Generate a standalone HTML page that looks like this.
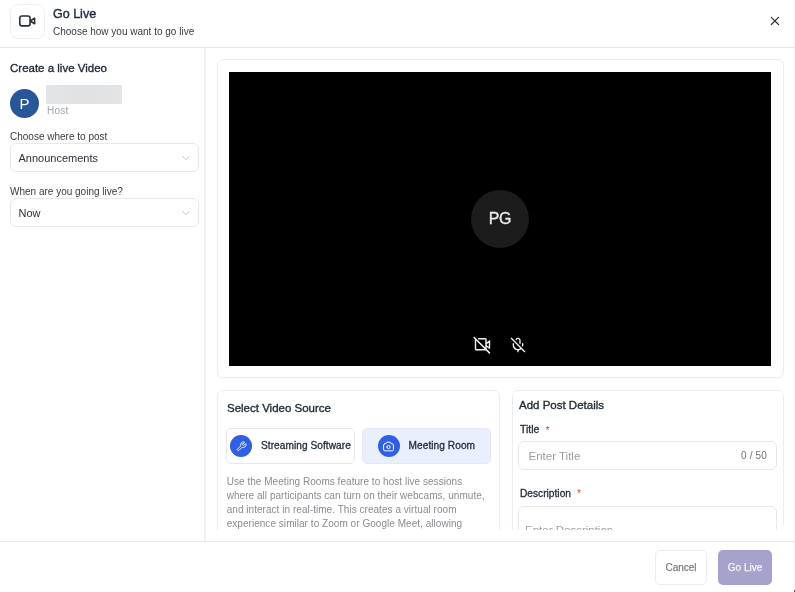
<!DOCTYPE html>
<html><head><meta charset="utf-8">
<style>
*{box-sizing:border-box;margin:0;padding:0}
html,body{width:795px;height:592px;overflow:hidden;background:#fff;font-family:"Liberation Sans",sans-serif;color:#1f2937}
.abs{position:absolute}
#rb{position:absolute;left:794px;top:0;width:1px;height:592px;background:#f4f4f4}
#hdr{position:absolute;left:0;top:0;width:794px;height:48px;border-bottom:1px solid #e5e7eb}
#hicon{position:absolute;left:10px;top:3.5px;width:35px;height:35px;border:1px solid #eeeff1;border-radius:8px}
#htitle{position:absolute;left:53px;top:6.5px;font-size:12.5px;-webkit-text-stroke:0.4px #1e293b;color:#1e293b;white-space:nowrap}
#hsub{position:absolute;left:53px;top:26px;font-size:10px;color:#363b43;white-space:nowrap}
#close{position:absolute;left:769px;top:15px;width:12px;height:12px}
#side{position:absolute;left:0;top:48px;width:204px;height:493px}
#sideb{position:absolute;left:204px;top:48px;width:2px;height:493px;background:#f1f1f1}
.lbl{position:absolute;font-size:10px;color:#363a41;white-space:nowrap}
.sel{position:absolute;left:10px;width:189px;height:29px;border:1px solid #e8e8e8;border-radius:6px}
.sel span{position:absolute;left:7.5px;top:8px;font-size:11px;color:#2b2f37}
.sel svg{position:absolute;left:171px;top:12px}
#footer{position:absolute;left:0;top:541px;width:794px;height:51px;border-top:1px solid #e5e7eb}
.card{position:absolute;border:1px solid #ededed;border-radius:6px;box-shadow:0 1px 2px rgba(0,0,0,0.03)}
</style></head><body>
<div id="wrap" style="position:absolute;left:0;top:0;width:795px;height:592px;will-change:transform">
<div id="rb"></div>
<div class="abs" style="left:794px;top:590px;width:1px;height:2px;background:#5c606b"></div>
<div id="hdr">
  <div id="hicon"></div>
  <svg class="abs" style="left:0;top:0" width="50" height="40" viewBox="0 0 50 40" fill="none" stroke="#282e3a" stroke-width="1.6" stroke-linecap="round" stroke-linejoin="round"><rect x="19.8" y="16" width="10.3" height="9.9" rx="2.2"/><path d="M30.3 21L34.6 18.2V23.8Z"/></svg>
  <div id="htitle">Go Live</div>
  <div id="hsub">Choose how you want to go live</div>
  <svg id="close" viewBox="0 0 12 12" fill="none" stroke="#2a313d" stroke-width="1.2" stroke-linecap="round"><path d="M2.3 2.3L9.5 9.5M9.5 2.3L2.3 9.5"/></svg>
</div>

<div id="sideb"></div>
<div id="side">
  <div class="abs" style="left:10px;top:13.5px;font-size:11.5px;-webkit-text-stroke:0.35px #1f2937;color:#1f2937;white-space:nowrap">Create a live Video</div>
  <div class="abs" style="left:10px;top:40.5px;width:29px;height:29px;border-radius:50%;background:#27569b;color:#fff;font-size:15px;text-align:center;line-height:29px">P</div>
  <div class="abs" style="left:46px;top:37px;width:76px;height:19px;background:linear-gradient(90deg,#e4e5e7,#e0e1e3 50%,#e3e4e6)"></div>
  <div class="abs" style="left:47px;top:57px;font-size:10px;letter-spacing:0.2px;color:#a4a5a9">Host</div>
  <div class="lbl" style="left:10px;top:83px">Choose where to post</div>
  <div class="sel" style="top:95px"><span>Announcements</span><svg width="10" height="6" viewBox="0 0 10 6" fill="none" stroke="#bfbfc2" stroke-width="1"><path d="M0.4 0.2L3.9 3.7L7.4 0.2"/></svg></div>
  <div class="lbl" style="left:10px;top:138px">When are you going live?</div>
  <div class="sel" style="top:150px"><span>Now</span><svg width="10" height="6" viewBox="0 0 10 6" fill="none" stroke="#bfbfc2" stroke-width="1"><path d="M0.4 0.2L3.9 3.7L7.4 0.2"/></svg></div>
</div>

<div id="main" class="abs" style="left:206px;top:48px;width:588px;height:482px;overflow:hidden">
  <div class="card" style="left:11px;top:11px;width:567px;height:319px">
    <div class="abs" style="left:11px;top:12px;width:542px;height:294px;background:#000">
      <div class="abs" style="left:242px;top:118px;width:58px;height:58px;border-radius:50%;background:#1c1c1c;color:#ebebeb;font-size:16px;-webkit-text-stroke:0.3px #ebebeb;text-align:center;line-height:58px;letter-spacing:-0.3px">PG</div>
    <svg class="abs" style="left:241px;top:261px" width="24" height="24" viewBox="0 0 24 24" fill="none" stroke="#f2f2f2" stroke-width="1.4" stroke-linecap="round" stroke-linejoin="round"><path d="M8.7 5.8H15.2Q16 5.8 16 6.6V16Q16 16.8 15.2 16.8H6.3Q5.5 16.8 5.5 16V6.8"/><path d="M16.3 10.6L19.5 8V15.3L16.3 12.8"/><path d="M4.1 4.5L19.5 19.9" stroke-width="1.5"/></svg>
    <svg class="abs" style="left:281.2px;top:264.6px" width="16" height="16" viewBox="0 0 24 24" fill="none" stroke="#f2f2f2" stroke-width="2" stroke-linecap="round" stroke-linejoin="round"><line x1="2" x2="22" y1="2" y2="22"/><path d="M18.89 13.23A7.12 7.12 0 0 0 19 12v-2"/><path d="M5 10v2a7 7 0 0 0 12 5"/><path d="M15 9.34V5a3 3 0 0 0-5.68-1.33"/><line x1="12" x2="12" y1="19" y2="22"/></svg>
    </div>
  </div>
  <div class="card" style="left:11px;top:342px;width:283px;height:200px">
    <div class="abs" style="left:9px;top:10.7px;font-size:11.5px;-webkit-text-stroke:0.35px #1f2937;color:#1f2937;white-space:nowrap">Select Video Source</div>
    <div class="abs" style="left:8px;top:37px;width:129px;height:36px;border:1px solid #e5e7eb;border-radius:5px">
      <div class="abs" style="left:3px;top:6px;width:22px;height:22px;border-radius:50%;background:#2f5fe3">
        <svg class="abs" style="left:6px;top:5.5px" width="11" height="11" viewBox="0 0 24 24" fill="none" stroke="#fff" stroke-width="1.9" stroke-linecap="round" stroke-linejoin="round"><path d="M14.7 6.3a1 1 0 0 0 0 1.4l1.6 1.6a1 1 0 0 0 1.4 0l3.77-3.77a6 6 0 0 1-7.94 7.94l-6.91 6.91a2.12 2.12 0 0 1-3-3l6.91-6.91a6 6 0 0 1 7.94-7.94l-3.76 3.76z"/></svg>
      </div>
      <div class="abs" style="left:34px;top:11px;font-size:10.1px;letter-spacing:0.07px;-webkit-text-stroke:0.3px #1f2937;color:#1f2937;white-space:nowrap">Streaming Software</div>
    </div>
    <div class="abs" style="left:144px;top:37px;width:129px;height:36px;border:1px solid #e3e8f3;border-radius:5px;background:#eaf0fb">
      <div class="abs" style="left:15px;top:6px;width:22px;height:22px;border-radius:50%;background:#2f5fe3">
        <svg class="abs" style="left:4.1px;top:4.5px" width="13" height="13" viewBox="0 0 24 24" fill="none" stroke="#fff" stroke-width="1.8" stroke-linecap="round" stroke-linejoin="round"><path d="M5 7h1a2 2 0 0 0 2 -2a1 1 0 0 1 1 -1h6a1 1 0 0 1 1 1a2 2 0 0 0 2 2h1a2 2 0 0 1 2 2v9a2 2 0 0 1 -2 2h-14a2 2 0 0 1 -2 -2v-9a2 2 0 0 1 2 -2"/><path d="M9 13a3 3 0 1 0 6 0a3 3 0 0 0 -6 0"/></svg>
      </div>
      <div class="abs" style="left:45.5px;top:11px;font-size:10.1px;letter-spacing:0.08px;-webkit-text-stroke:0.3px #1f2937;color:#1f2937;white-space:nowrap">Meeting Room</div>
    </div>
    <div class="abs" style="left:8.7px;top:83.7px;width:272px;font-size:10px;line-height:14px;letter-spacing:0.04px;color:#8a8b90">Use the Meeting Rooms feature to host live sessions<br>where all participants can turn on their webcams, unmute,<br>and interact in real-time. This creates a virtual room<br>experience similar to Zoom or Google Meet, allowing</div>
  </div>
  <div class="card" style="left:306px;top:342px;width:272px;height:200px">
    <div class="abs" style="left:6px;top:8px;font-size:11.5px;-webkit-text-stroke:0.35px #1f2937;color:#1f2937;white-space:nowrap">Add Post Details</div>
    <div class="abs" style="left:7px;top:32.3px;font-size:10.5px;-webkit-text-stroke:0.3px #1f2937;color:#1f2937;white-space:nowrap">Title <span style="-webkit-text-stroke:0;color:#e0453a;margin-left:3px;position:relative;top:0.7px">*</span></div>
    <div class="abs" style="left:5px;top:49.7px;width:259px;height:29px;border:1px solid #e8e8e8;border-radius:6px">
      <div class="abs" style="left:9.5px;top:8px;font-size:11.5px;color:#9a9b9f;white-space:nowrap">Enter Title</div>
      <div class="abs" style="right:9px;top:8px;font-size:10px;letter-spacing:0.15px;color:#6f7075;white-space:nowrap">0 / 50</div>
    </div>
    <div class="abs" style="left:7px;top:97px;font-size:10.2px;-webkit-text-stroke:0.3px #1f2937;color:#1f2937;white-space:nowrap">Description <span style="-webkit-text-stroke:0;color:#e0453a;margin-left:3.2px">*</span></div>
    <div class="abs" style="left:5px;top:114.7px;width:259px;height:60px;border:1px solid #e8e8e8;border-radius:6px">
      <div class="abs" style="left:6px;top:17.3px;font-size:11.5px;color:#a0a1a5;white-space:nowrap">Enter Description</div>
    </div>
  </div>
<div class="abs" style="left:576px;top:477px;width:3px;height:6px;background:#fff"></div>
</div>

<div id="footer">
  <div class="abs" style="left:655px;top:8px;width:52px;height:35px;border:1px solid #ececec;border-radius:5px;font-size:10px;color:#808080;-webkit-text-stroke:0.25px #808080;text-align:center;line-height:33px">Cancel</div>
  <div class="abs" style="left:718px;top:8px;width:54px;height:35px;border-radius:5px;background:#a5a2cb;font-size:10px;color:#f4f4f8;-webkit-text-stroke:0.25px #f4f4f8;text-align:center;line-height:35px">Go Live</div>
</div>
</div>
</body></html>
